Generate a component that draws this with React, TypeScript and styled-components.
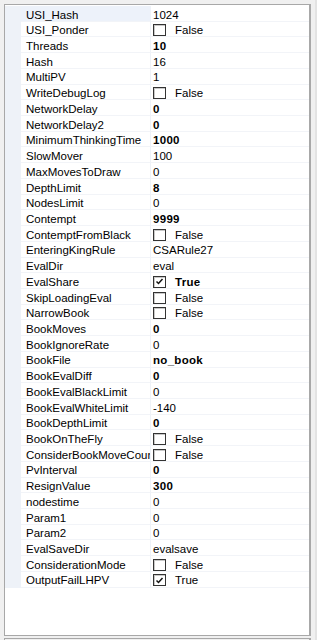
import { FC } from "react";
import styled, { createGlobalStyle } from "styled-components";

type Option = {
  name: string;
  value: string;
  bold?: boolean;
  check?: boolean;
};

const OPTIONS: Option[] = [
  { name: "USI_Hash", value: "1024" },
  { name: "USI_Ponder", value: "False", check: true },
  { name: "Threads", value: "10", bold: true },
  { name: "Hash", value: "16" },
  { name: "MultiPV", value: "1" },
  { name: "WriteDebugLog", value: "False", check: true },
  { name: "NetworkDelay", value: "0", bold: true },
  { name: "NetworkDelay2", value: "0", bold: true },
  { name: "MinimumThinkingTime", value: "1000", bold: true },
  { name: "SlowMover", value: "100" },
  { name: "MaxMovesToDraw", value: "0" },
  { name: "DepthLimit", value: "8", bold: true },
  { name: "NodesLimit", value: "0" },
  { name: "Contempt", value: "9999", bold: true },
  { name: "ContemptFromBlack", value: "False", check: true },
  { name: "EnteringKingRule", value: "CSARule27" },
  { name: "EvalDir", value: "eval" },
  { name: "EvalShare", value: "True", check: true, bold: true },
  { name: "SkipLoadingEval", value: "False", check: true },
  { name: "NarrowBook", value: "False", check: true },
  { name: "BookMoves", value: "0", bold: true },
  { name: "BookIgnoreRate", value: "0" },
  { name: "BookFile", value: "no_book", bold: true },
  { name: "BookEvalDiff", value: "0", bold: true },
  { name: "BookEvalBlackLimit", value: "0" },
  { name: "BookEvalWhiteLimit", value: "-140" },
  { name: "BookDepthLimit", value: "0", bold: true },
  { name: "BookOnTheFly", value: "False", check: true },
  { name: "ConsiderBookMoveCount", value: "False", check: true },
  { name: "PvInterval", value: "0", bold: true },
  { name: "ResignValue", value: "300", bold: true },
  { name: "nodestime", value: "0" },
  { name: "Param1", value: "0" },
  { name: "Param2", value: "0" },
  { name: "EvalSaveDir", value: "evalsave" },
  { name: "ConsiderationMode", value: "False", check: true },
  { name: "OutputFailLHPV", value: "True", check: true },
];

const CheckBox: FC<{ checked: boolean }> = ({ checked }) => (
  <StyledCheckBox>
    {checked && (
      <svg width="9" height="9" viewBox="0 0 9 9">
        <path d="M1.5 4.5 L3.5 6.5 L7.5 2" fill="none" stroke="#111" strokeWidth="1.5" />
      </svg>
    )}
  </StyledCheckBox>
);

const PropertyRow: FC<{ option: Option; selected?: boolean }> = ({
  option,
  selected,
}) => (
  <StyledRow>
    <StyledGutter />
    <StyledNameCell $selected={selected}>{option.name}</StyledNameCell>
    <StyledValueCell $bold={option.bold}>
      {option.check && <CheckBox checked={option.value === "True"} />}
      <span>{option.value}</span>
    </StyledValueCell>
  </StyledRow>
);

export default function App() {
  return (
    <>
      <GlobalStyle />
      <StyledFrame>
        <StyledGrid>
          <StyledRows>
            {OPTIONS.map((option, i) => (
              <PropertyRow key={option.name} option={option} selected={i === 0} />
            ))}
          </StyledRows>
          <StyledFiller />
        </StyledGrid>
        <StyledHelpBox />
      </StyledFrame>
    </>
  );
}

const GlobalStyle = createGlobalStyle`
  body {
    margin: 0;
    background: #f0f0f0;
    font-family: "Liberation Sans", Arial, sans-serif;
  }
`;

const StyledFrame = styled.div`
  box-sizing: border-box;
  width: 317px;
  height: 640px;
  padding: 4px 4px 0 4px;
  display: flex;
  flex-direction: column;
  gap: 2px;
  background: #f0f0f0;
  border-right: 2px solid #e3e3e3;
  overflow: hidden;
`;

const StyledGrid = styled.div`
  box-sizing: border-box;
  flex: none;
  height: 632px;
  display: flex;
  flex-direction: column;
  padding-top: 1px;
  background: #ffffff;
  border: 1px solid #a8a8a8;
  border-right: 2px solid #a8a8a8;
`;

const StyledRows = styled.div`
  display: flex;
  flex-direction: column;
`;

const StyledRow = styled.div`
  display: grid;
  grid-template-columns: 16px 130px 1fr;
  height: 15.72px;
  font-size: 11.5px;
  color: #000;
`;

const StyledGutter = styled.div`
  background: #eef2f8;
`;

const StyledNameCell = styled.div<{ $selected?: boolean }>`
  box-sizing: border-box;
  padding: 3.6px 0 0 5px;
  line-height: 11.9px;
  white-space: nowrap;
  overflow: hidden;
  background: ${({ $selected }) => ($selected ? "#edf2fa" : "#ffffff")};
  border-right: 1px solid #eef2f8;
  border-bottom: 1px solid #f2f4f8;
`;

const StyledValueCell = styled.div<{ $bold?: boolean }>`
  box-sizing: border-box;
  display: flex;
  align-items: flex-start;
  gap: 9px;
  padding: 3.6px 0 0 2px;
  line-height: 11.9px;
  white-space: nowrap;
  overflow: hidden;
  font-weight: ${({ $bold }) => ($bold ? 700 : 400)};
  letter-spacing: ${({ $bold }) => ($bold ? "0.3px" : "0")};
  border-bottom: 1px solid #f2f4f8;
`;

const StyledCheckBox = styled.span`
  box-sizing: border-box;
  flex: none;
  width: 13px;
  height: 12px;
  margin-top: -1px;
  display: flex;
  align-items: center;
  justify-content: center;
  background: #ffffff;
  border: 1px solid #333333;
  box-shadow: inset 1px 1px 0 #c8c8c8;
`;

const StyledFiller = styled.div`
  flex: 1;
  background: #ffffff;
`;

const StyledHelpBox = styled.div`
  flex: 1;
  background: #f0f0f0;
  border-top: 1px solid #a8a8a8;
  border-left: 1px solid #a8a8a8;
  border-right: 2px solid #a8a8a8;
`;
